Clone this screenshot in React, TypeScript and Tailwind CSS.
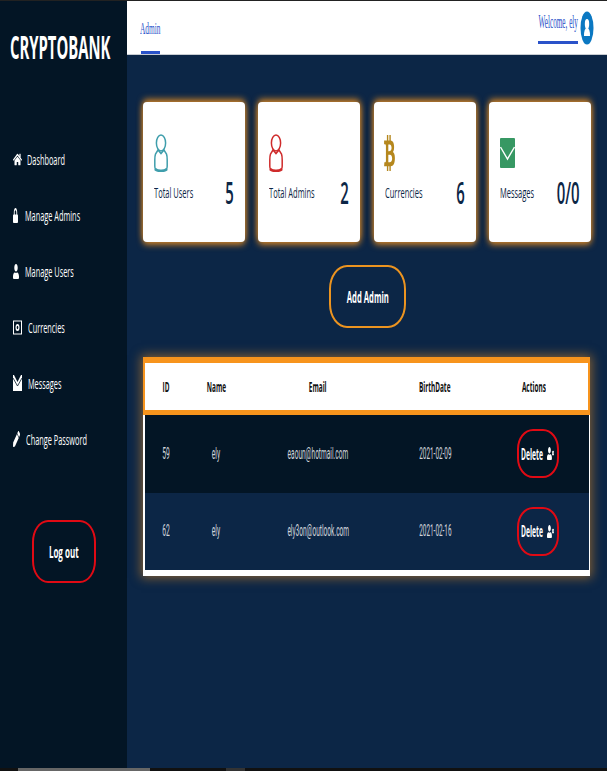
import type { ReactNode } from "react";
import { FaBtc, FaHome, FaLock, FaUser, FaPen, FaUserTimes } from "react-icons/fa";

const sans = "font-['Open_Sans',sans-serif]";

// The shot is squashed sideways, so text is drawn tall and narrow. Width is zero so it never pushes layout.
function Squeeze({ children, className = "", align = "center" }: { children: ReactNode; className?: string; align?: "left" | "center" | "right" }) {
  const outer = align === "left" ? "justify-start" : align === "right" ? "justify-end" : "justify-center";
  const origin = align === "left" ? "origin-left" : align === "right" ? "origin-right" : "origin-center";
  return (
    <span className={`inline-flex w-0 ${outer} justify-self-center`}>
      <span className={`shrink-0 whitespace-nowrap ${origin} ${className}`}>{children}</span>
    </span>
  );
}

function Person({ color }: { color: string }) {
  return (
    <svg width="14" height="38" viewBox="0 0 14 38" fill="none" stroke={color} strokeWidth="1.5">
      <ellipse cx="7" cy="9" rx="4.6" ry="8" />
      <path d="M4 16 L1.5 20 Q0.8 22 0.8 26 V32 Q0.8 36.5 4 36.5 H10 Q13.2 36.5 13.2 32 V26 Q13.2 22 12.5 20 L10 16 L7 19.5 Z" />
      <path d="M1 35 Q3 37 7 37 Q11 37 13 35" strokeWidth="2.5" />
    </svg>
  );
}

function Mail() {
  return (
    <svg width="15" height="30" viewBox="0 0 15 30">
      <rect width="15" height="30" rx="1" fill="#379863" />
      <path d="M0.5 9 L7.5 21 L14.5 9" fill="none" stroke="#fff" strokeWidth="1.4" />
    </svg>
  );
}

function Coins() {
  return (
    <svg width="9" height="15" viewBox="0 0 9 15">
      <rect x="0.5" y="1" width="8" height="13" fill="none" stroke="#fff" strokeWidth="1" />
      <ellipse cx="4.5" cy="7.5" rx="2" ry="3.5" fill="#fff" />
      <ellipse cx="4.5" cy="7.5" rx="0.8" ry="1.8" fill="#031525" />
    </svg>
  );
}

function NavMail() {
  return (
    <svg width="9" height="16" viewBox="0 0 9 16">
      <rect width="9" height="16" fill="#fff" />
      <path d="M1 0 L4.5 7 L8 0 Z" fill="#031525" />
      <path d="M0 3 L4.5 11 L9 3" fill="none" stroke="#031525" strokeWidth="0.8" />
    </svg>
  );
}

const nav: { label: string; icon: ReactNode; gap: string }[] = [
  { label: "Dashboard", icon: <FaHome preserveAspectRatio="none" className="w-[9px] h-[13px]" />, gap: "gap-[5px]" },
  { label: "Manage Admins", icon: <FaLock preserveAspectRatio="none" className="w-[5px] h-[15px]" />, gap: "gap-[7px]" },
  { label: "Manage Users", icon: <FaUser preserveAspectRatio="none" className="w-[6px] h-[15px]" />, gap: "gap-[6px]" },
  { label: "Currencies", icon: <Coins />, gap: "gap-[6px]" },
  { label: "Messages", icon: <NavMail />, gap: "gap-[6px]" },
  { label: "Change Password", icon: <FaPen preserveAspectRatio="none" className="w-[7px] h-[16px]" />, gap: "gap-[6px]" },
];

const cards: { label: string; value: string; icon: ReactNode }[] = [
  { label: "Total Users", value: "5", icon: <Person color="#3f9eac" /> },
  { label: "Total Admins", value: "2", icon: <Person color="#cf2b2b" /> },
  { label: "Currencies", value: "6", icon: <FaBtc preserveAspectRatio="none" className="w-[11px] h-[36px] text-[#b5871d] -ml-px" /> },
  { label: "Messages", value: "0/0", icon: <Mail /> },
];

const rows = [
  { id: "59", name: "ely", email: "eaoun@hotmail.com", date: "2021-02-09", bg: "bg-[#031525]" },
  { id: "62", name: "ely", email: "ely3on@outlook.com", date: "2021-02-16", bg: "bg-[#0c2646]" },
];

const cols = "grid grid-cols-[42px_58px_146px_88px_110px] items-center justify-items-center";

export default function App() {
  return (
    <div className={`w-[607px] h-[771px] overflow-hidden flex flex-col bg-[#0c2646] ${sans}`}>
      <div className="h-px bg-[#222] shrink-0" />
      <div className="flex flex-1 min-h-0">
        <aside className="w-[127px] shrink-0 bg-[#031525] text-white flex flex-col">
          <div className="h-[87px] pl-[10px] pt-[24px] text-[33px] leading-[44px] font-bold">
            <Squeeze align="left" className="scale-x-[0.45]">CRYPTOBANK</Squeeze>
          </div>
          <nav className="pt-[43px] flex flex-col">
            {nav.map((item) => (
              <div key={item.label} className={`h-[56px] pl-[13px] flex items-center ${item.gap}`}>
                <span className="flex items-center justify-center shrink-0">{item.icon}</span>
                <Squeeze align="left" className="text-[15px] font-medium scale-x-[0.49]">{item.label}</Squeeze>
              </div>
            ))}
          </nav>
          <button className="mt-[53px] ml-[32px] w-[64px] h-[63px] rounded-[16px/22px] border-2 border-[#e00a14] text-[16px] font-bold">
            <Squeeze className="scale-x-[0.5]">Log out</Squeeze>
          </button>
        </aside>

        <main className="flex-1 min-w-0 flex flex-col">
          <header className="h-[54px] shrink-0 bg-white border-b border-[#c9cdd2] flex justify-between font-['Liberation_Serif',serif] text-[#2a52c9]">
            <div className="ml-[14px] w-[19px] flex flex-col items-center">
              <div className="flex-1 flex items-center text-[16px] pt-[5px]">
                <Squeeze className="scale-x-[0.46]">Admin</Squeeze>
              </div>
              <div className="h-[3px] w-full bg-[#2a52c9]" />
            </div>
            <div className="flex items-start mr-[13px] pt-[10px] gap-[2px]">
              <div className="w-[40px] flex flex-col items-center">
                <div className="h-[27px] text-[18px] leading-[22px]">
                  <Squeeze className="scale-x-[0.4]">Welcome, ely</Squeeze>
                </div>
                <div className="h-[3px] w-full bg-[#2a52c9] mt-[3px]" />
              </div>
              <svg width="14" height="34" viewBox="0 0 14 34">
                <ellipse cx="7" cy="17" rx="6.5" ry="16.5" fill="#0b78c2" />
                <ellipse cx="7" cy="13" rx="2.2" ry="5" fill="#fff" />
                <path d="M4 25 Q4 17 7 17 Q10 17 10 25 Z" fill="#fff" />
              </svg>
            </div>
          </header>

          <section className="pt-[47px] pl-[16px] pr-[16px]">
            <div className="flex gap-[13.6px]">
              {cards.map((card) => (
                <div
                  key={card.label}
                  className="w-[102px] h-[140px] bg-white rounded-[4px] pl-[11px] pr-[11px] pt-[32px] text-[#0c2646] shadow-[0_-3px_6px_rgba(226,140,35,0.85),0_3px_6px_rgba(226,140,35,0.85)]"
                >
                  <div className="h-[38px] flex items-center">{card.icon}</div>
                  <div className="flex items-center justify-between h-[40px]">
                    <Squeeze align="left" className="text-[15px] font-medium scale-x-[0.5]">{card.label}</Squeeze>
                    <Squeeze align="right" className="text-[31px] font-semibold scale-x-[0.48]">{card.value}</Squeeze>
                  </div>
                </div>
              ))}
            </div>

            <div className="flex justify-center mt-[23px] pl-[1px]">
              <button className="w-[77px] h-[63px] rounded-[18px/24px] border-2 border-[#ec9420] text-white text-[16px] font-bold">
                <Squeeze className="scale-x-[0.48]">Add Admin</Squeeze>
              </button>
            </div>

            <div className="mt-[29px] w-[447px] shadow-[0_0_10px_2px_rgba(226,140,35,0.55)] bg-white pb-[6px] pl-[2px]">
              <div className={`${cols} -ml-[2px] h-[58px] w-[447px] border-t-[6px] border-b-[5px] border-x-2 border-[#f7941d] text-[#111] text-[15px] font-bold`}>
                <Squeeze className="scale-x-[0.43]">ID</Squeeze>
                <Squeeze className="scale-x-[0.43]">Name</Squeeze>
                <Squeeze className="scale-x-[0.43]">Email</Squeeze>
                <Squeeze className="scale-x-[0.43]">BirthDate</Squeeze>
                <Squeeze className="scale-x-[0.43]">Actions</Squeeze>
              </div>
              {rows.map((row) => (
                <div key={row.id} className={`${cols} ${row.bg} h-[77.5px] w-[444px] text-[#d0d4db] text-[16px] font-['Roboto',sans-serif] font-normal`}>
                  <Squeeze className="scale-x-[0.42]">{row.id}</Squeeze>
                  <Squeeze className="scale-x-[0.42]">{row.name}</Squeeze>
                  <Squeeze className="scale-x-[0.41]">{row.email}</Squeeze>
                  <Squeeze className="scale-x-[0.4]">{row.date}</Squeeze>
                  <div className="pl-[8px]">
                    <button className={`w-[42px] h-[49px] rounded-[16px/20px] border-2 border-[#e00a14] text-white text-[16px] font-bold flex items-center pl-[3px] gap-[4px] ${sans}`}>
                      <span className="w-[21px] flex justify-center"><Squeeze className="scale-x-[0.42]">Delete</Squeeze></span>
                      <FaUserTimes preserveAspectRatio="none" className="w-[7px] h-[13px] shrink-0" />
                    </button>
                  </div>
                </div>
              ))}
            </div>
          </section>
        </main>
      </div>
      <div className="h-[3px] shrink-0 bg-[#111] flex">
        <div className="ml-[18px] w-[132px] bg-[#666]" />
        <div className="ml-[76px] w-[19px] bg-[#333]" />
      </div>
    </div>
  );
}
